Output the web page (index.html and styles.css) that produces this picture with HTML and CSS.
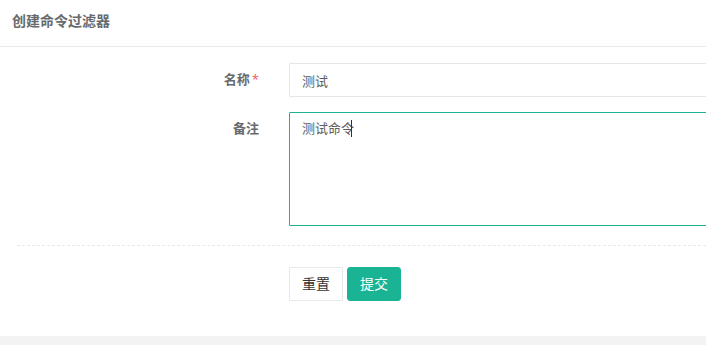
FILE: index.html
```html
<!DOCTYPE html>
<html lang="zh-CN">
<head>
<meta charset="utf-8">
<title>创建命令过滤器</title>
<link rel="stylesheet" href="styles.css">
</head>
<body>
<div class="ibox">
  <div class="ibox-title"><h5>创建命令过滤器</h5></div>
  <div class="ibox-content">
    <form class="form">
      <div class="form-group">
        <label class="control-label">名称<span class="req">*</span></label>
        <div class="field">
          <input class="form-control" type="text" value="测试">
        </div>
      </div>
      <div class="form-group">
        <label class="control-label">备注</label>
        <div class="field field-area">
          <textarea class="form-control area">测试命令</textarea>
          <span class="caret"></span>
        </div>
      </div>
      <div class="hr-line-dashed"></div>
      <div class="form-group actions">
        <div class="label-spacer"></div>
        <div class="field buttons">
          <button type="reset" class="btn btn-white">重置</button>
          <button type="button" class="btn btn-primary">提交</button>
        </div>
      </div>
    </form>
  </div>
</div>
</body>
</html>
```
FILE: styles.css
```css
html, body {
  margin: 0;
  padding: 0;
  overflow: hidden;
}
body {
  background: #f3f3f4;
  font-family: "Open Sans", "Noto Sans CJK SC", sans-serif;
  font-size: 13px;
  color: #676a6c;
  width: 706px;
  height: 345px;
}
.ibox {
  background: #ffffff;
}
.ibox-title {
  height: 47px;
  box-sizing: border-box;
  padding: 11px 12px 0;
  border-bottom: 1px solid #e7eaec;
}
.ibox-title h5 {
  margin: 0;
  font-size: 14px;
  line-height: 20px;
  font-weight: 700;
  color: #676a6c;
}
.ibox-content {
  padding: 16px 0 35px 0;
}
.form {
  margin: 0;
}
.form-group {
  display: flex;
  margin-bottom: 15px;
}
.control-label,
.label-spacer {
  flex: none;
  width: 274px;
  box-sizing: border-box;
  padding: 7px 15px 0 0;
  text-align: right;
  font-weight: 700;
  line-height: 18.6px;
  color: #676a6c;
}
.req {
  color: #ed5565;
  margin-left: 2px;
  font-weight: 400;
}
.field {
  flex: none;
  width: 540px;
  padding-left: 15px;
  position: relative;
}
.form-control {
  display: block;
  width: 100%;
  box-sizing: border-box;
  height: 34px;
  padding: 6px 12px;
  font-family: inherit;
  font-size: 13px;
  line-height: 18.6px;
  color: #5e5e5e;
  background: #ffffff;
  border: 1px solid #e5e6e7;
  border-radius: 1px;
  outline: none;
  margin: 0;
}
.area {
  height: 114px;
  resize: vertical;
  border-color: #1ab394;
}
.caret {
  position: absolute;
  left: 77px;
  top: 8px;
  width: 1px;
  height: 17px;
  background: #333333;
}
.hr-line-dashed {
  border-top: 1px dashed #e7eaec;
  height: 0;
  margin: 19px 0 21px 17px;
}
.actions {
  margin-bottom: 0;
}
.buttons {
  display: flex;
  gap: 4px;
}
.btn {
  font-family: inherit;
  font-size: 14px;
  line-height: 20px;
  padding: 6px 12px;
  border-radius: 3px;
  border: 1px solid transparent;
  height: 34px;
  box-sizing: border-box;
  cursor: pointer;
  margin: 0;
}
.btn-white {
  background: #ffffff;
  border-color: #e7eaec;
  color: #333333;
  border-radius: 1px;
}
.btn-primary {
  background: #1ab394;
  border-color: #1ab394;
  color: #ffffff;
}
```
